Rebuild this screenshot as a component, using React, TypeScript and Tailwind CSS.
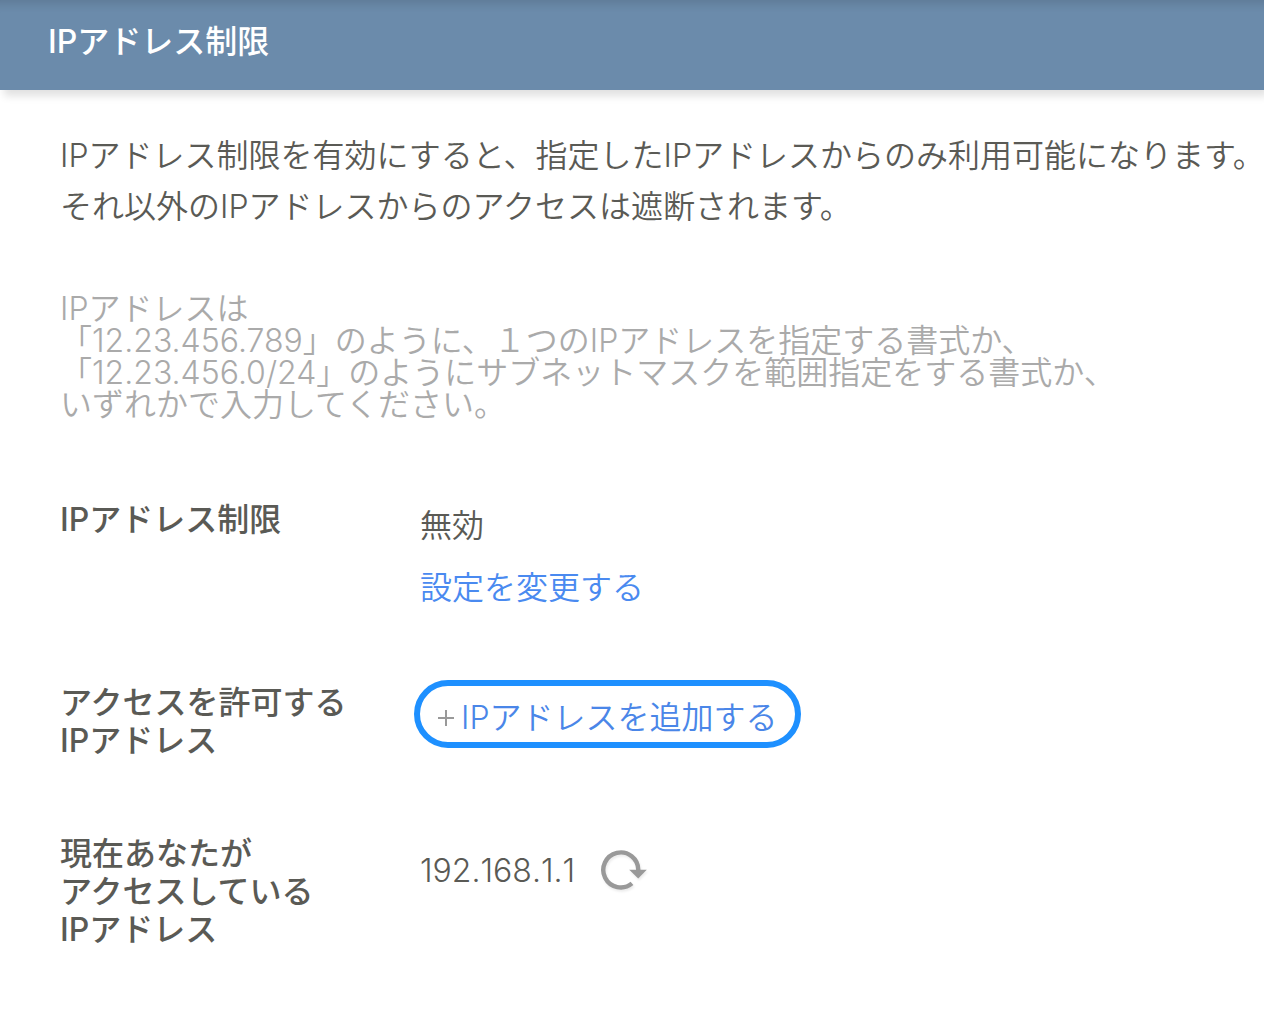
import type { ReactNode } from 'react';

function RefreshIcon() {
  return (
    <svg viewBox="0 0 48 44" className="h-11 w-12 drop-shadow-[1px_2px_1px_rgba(0,0,0,0.08)]" aria-hidden="true">
      <path d="M39.3 21A17.5 17.5 0 1 0 33 34.4" fill="none" stroke="#999" strokeWidth="4.4" />
      <path d="M30.2 20.8H47.8L39.2 29.6Z" fill="#999" />
    </svg>
  );
}

function PlusIcon() {
  return (
    <svg viewBox="0 0 18 18" className="size-[18px]" aria-hidden="true">
      <path d="M9 1V17M1 9H17" fill="none" stroke="#999" strokeWidth="2" />
    </svg>
  );
}

function SettingRow({ label, children }: { label: ReactNode; children: ReactNode }) {
  return (
    <div className="flex">
      <dt className="w-[360px] shrink-0 font-medium leading-[38px]">{label}</dt>
      <dd className="flex flex-col items-start">{children}</dd>
    </div>
  );
}

export default function App() {
  return (
    <div className="min-h-screen overflow-x-hidden bg-white font-[Inter,'Noto_Sans_CJK_JP',sans-serif] text-[32px] font-[350] text-[#5a5a55]">
      {/* Header */}
      <header className="bg-[#6b8bab] px-12 pt-[18px] pb-6 text-white shadow-[4px_6px_8px_rgba(0,0,0,0.12),inset_0_14px_10px_-10px_rgba(0,0,0,0.12)]">
        <h1 className="font-medium leading-[48px]">IPアドレス制限</h1>
      </header>

      <main className="px-15 pt-10 pb-16">
        <p className="whitespace-nowrap leading-[51px]">
          IPアドレス制限を有効にすると、指定したIPアドレスからのみ利用可能になります。
          <br />
          それ以外のIPアドレスからのアクセスは遮断されます。
        </p>

        <p className="mt-[61px] whitespace-nowrap leading-8 text-[#aaa]">
          IPアドレスは
          <br />
          「12.23.456.789」のように、１つのIPアドレスを指定する書式か、
          <br />
          「12.23.456.0/24」のようにサブネットマスクを範囲指定をする書式か、
          <br />
          いずれかで入力してください。
        </p>

        {/* Settings */}
        <dl className="mt-20">
          <SettingRow label="IPアドレス制限">
            <span className="pt-1.5 leading-[38px]">無効</span>
            <a href="#edit" className="mt-6 leading-[38px] text-[#4a8af0]">
              設定を変更する
            </a>
          </SettingRow>

          <div className="mt-[77px]">
            <SettingRow
              label={
                <>
                  アクセスを許可する
                  <br />
                  IPアドレス
                </>
              }
            >
              <button
                type="button"
                className="-mt-1 -ml-1.5 flex h-[68px] items-center gap-1.5 rounded-full border-6 border-[#1e90ff] px-[17px] pt-2 text-[#4a86e8]"
              >
                <PlusIcon />
                IPアドレスを追加する
              </button>
            </SettingRow>
          </div>

          <div className="mt-[75px]">
            <SettingRow
              label={
                <>
                  現在あなたが
                  <br />
                  アクセスしている
                  <br />
                  IPアドレス
                </>
              }
            >
              <div className="flex items-center gap-6 pt-3">
                <span className="[font-kerning:none]">192.168.1.1</span>
                <button type="button" aria-label="更新">
                  <RefreshIcon />
                </button>
              </div>
            </SettingRow>
          </div>
        </dl>
      </main>
    </div>
  );
}
